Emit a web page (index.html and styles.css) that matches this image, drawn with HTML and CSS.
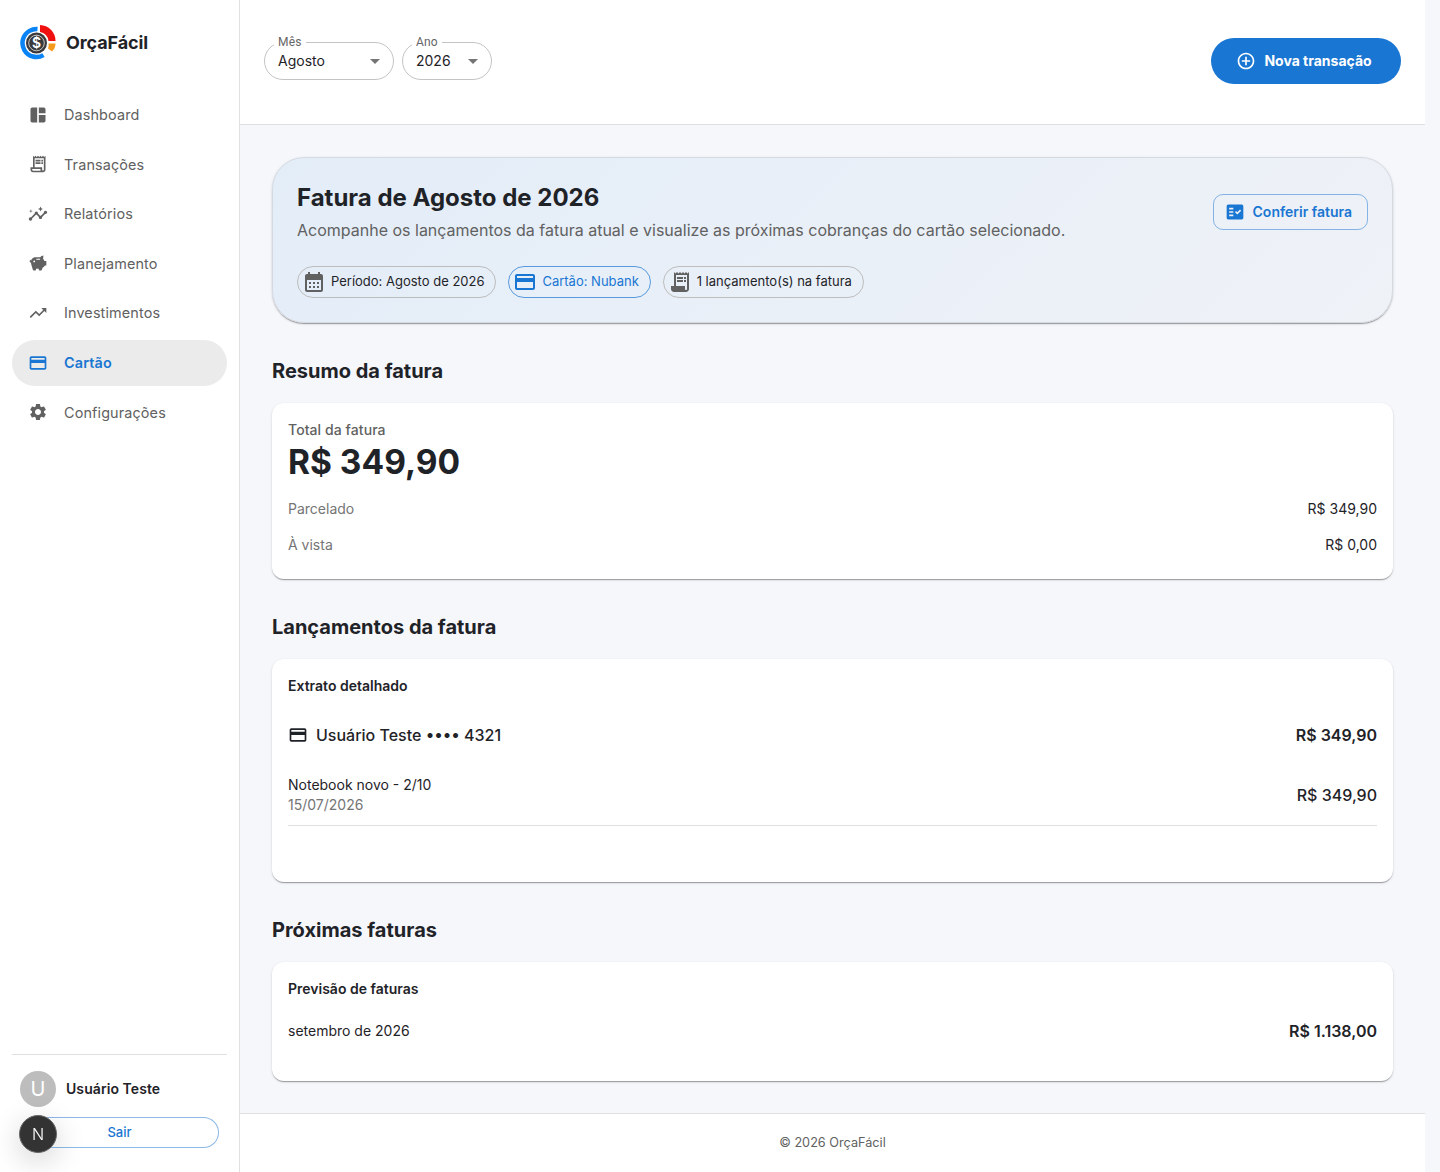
FILE: index.html
```html
<!DOCTYPE html>
<html lang="pt-BR">
<head>
  <meta charset="UTF-8">
  <meta name="viewport" content="width=device-width, initial-scale=1.0">
  <title>OrçaFácil</title>
  <link rel="stylesheet" href="styles.css">
</head>
<body>
  <div class="layout">
    <aside class="sidebar">
      <div class="brand">
        <svg class="brand__logo" viewBox="0 0 36 36">
          <circle cx="16.500" cy="18" r="14" fill="none" stroke="#0a84f5" stroke-width="4.500" stroke-dasharray="52 100" transform="rotate(60 16.500 18)"/>
          <path d="M20 0a16 16 0 0 1 15.500 16h-7a10 10 0 0 0 -8.500 -9z" fill="#f01010"/>
          <path d="M28.500 18.500h7a11 11 0 0 1 -3.500 8l-4 -3a8 8 0 0 0 .5 -5z" fill="#f59a1c"/>
          <circle cx="16.500" cy="18" r="10.500" fill="#3a3a3c"/>
          <circle cx="16.500" cy="18" r="7.800" fill="none" stroke="#fff" stroke-width=".7"/>
          <text class="brand__dollar" x="16.500" y="23" text-anchor="middle">$</text>
        </svg>
        <span class="brand__name">OrçaFácil</span>
      </div>
      <nav class="nav">
        <a class="nav__item">
          <svg class="nav__icon" viewBox="0 0 24 24"><path d="M11 21H5c-1.100 0-2-.9-2-2V5c0-1.100.9-2 2-2h6v18zm2 0h6c1.100 0 2-.9 2-2v-7h-8v9zm8-11V5c0-1.100-.9-2-2-2h-6v7h8z"/></svg>
          Dashboard
        </a>
        <a class="nav__item">
          <svg class="nav__icon" viewBox="0 0 24 24"><path d="M19.500 3.500 18 2l-1.500 1.500L15 2l-1.500 1.500L12 2l-1.500 1.500L9 2 7.500 3.500 6 2v14H3v3c0 1.660 1.340 3 3 3h12c1.660 0 3-1.340 3-3V2zM15 20H6c-.55 0-1-.45-1-1v-1h10zm4-1c0 .55-.45 1-1 1s-1-.45-1-1v-3H8V5h11z"/><path d="M9 7h6v2H9zM16 7h2v2h-2zM9 10h6v2H9zM16 10h2v2h-2z"/></svg>
          Transações
        </a>
        <a class="nav__item">
          <svg class="nav__icon" viewBox="0 0 24 24"><path d="M21 8c-1.450 0-2.260 1.440-1.930 2.510l-3.550 3.560c-.3-.09-.74-.09-1.040 0l-2.550-2.550C12.270 10.450 11.460 9 10 9c-1.450 0-2.270 1.440-1.930 2.520l-4.560 4.550C2.440 15.740 1 16.550 1 18c0 1.100.9 2 2 2 1.450 0 2.260-1.440 1.930-2.510l4.550-4.560c.3.09.74.09 1.040 0l2.550 2.550C12.730 16.550 13.540 18 15 18c1.450 0 2.270-1.440 1.930-2.520l3.560-3.550c1.070.33 2.510-.48 2.510-1.930 0-1.100-.9-2-2-2z"/><path d="m15 9 .94-2.070L18 6l-2.060-.93L15 3l-.92 2.070L12 6l2.080.93zM3.500 11 4 9l2-.5L4 8l-.5-2L3 8l-2 .5L3 9z"/></svg>
          Relatórios
        </a>
        <a class="nav__item">
          <svg class="nav__icon" viewBox="0 0 24 24"><path fill-rule="evenodd" d="M18.500 3c-1.500.2-2.900 1-3.800 2H9.500C6 5 3.500 7.500 3.500 10.500c0 2.300.9 5 1.600 7.300l.7 2.300c.1.5.5.9 1 .9h1.900c.5 0 .9-.4.9-.9V19h3.300v1.100c0 .5.4.9.9.9h1.900c.5 0 .9-.3 1-.8l.8-2.400c1.300-.6 2.200-1.400 2.900-2.700H22V9.500h-2.300c-.3-.9-.9-1.700-1.600-2.300.1-1.100.3-2.200.4-4.200zM7.500 9a1.100 1.100 0 1 1 0 2.200 1.100 1.100 0 0 1 0-2.200zM10 6.800h4.500v1.400H10z"/><path d="M3.500 8.200C2.500 8.400 2 9 2 10s.6 1.600 1.500 1.800z"/></svg>
          Planejamento
        </a>
        <a class="nav__item">
          <svg class="nav__icon" viewBox="0 0 24 24"><path d="m16 6 2.290 2.290-4.880 4.880-4-4L2 16.590 3.410 18l6-6 4 4 6.300-6.290L22 12V6z"/></svg>
          Investimentos
        </a>
        <a class="nav__item nav__item--active">
          <svg class="nav__icon" viewBox="0 0 24 24"><path d="M20 4H4c-1.110 0-1.990.89-1.990 2L2 18c0 1.110.89 2 2 2h16c1.110 0 2-.89 2-2V6c0-1.110-.89-2-2-2zm0 14H4v-6h16v6zm0-10H4V6h16v2z"/></svg>
          Cartão
        </a>
        <a class="nav__item">
          <svg class="nav__icon" viewBox="0 0 24 24"><path d="M19.140 12.940c.04-.3.06-.61.06-.94 0-.32-.02-.64-.07-.94l2.030-1.580c.18-.14.23-.41.12-.61l-1.920-3.320c-.12-.22-.37-.29-.59-.22l-2.390.96c-.5-.38-1.030-.7-1.620-.94l-.36-2.540c-.04-.24-.24-.41-.48-.41h-3.840c-.24 0-.43.17-.47.41l-.36 2.540c-.59.24-1.130.57-1.620.94l-2.390-.96c-.22-.08-.47 0-.59.22L2.740 8.870c-.12.21-.08.47.12.61l2.030 1.580c-.05.3-.09.63-.09.94s.02.64.07.94l-2.030 1.580c-.18.14-.23.41-.12.61l1.920 3.320c.12.22.37.29.59.22l2.390-.96c.5.38 1.030.7 1.620.94l.36 2.540c.05.24.24.41.48.41h3.840c.24 0 .44-.17.47-.41l.36-2.540c.59-.24 1.130-.56 1.620-.94l2.390.96c.22.08.47 0 .59-.22l1.920-3.320c.12-.22.07-.47-.12-.61l-2.010-1.580zM12 15.600c-1.980 0-3.600-1.620-3.600-3.600s1.620-3.600 3.600-3.600 3.600 1.620 3.600 3.600-1.620 3.600-3.600 3.600z"/></svg>
          Configurações
        </a>
      </nav>
      <div class="user">
        <div class="user__row">
          <span class="user__avatar">U</span>
          <span class="user__name">Usuário Teste</span>
        </div>
        <button class="user__logout">Sair</button>
      </div>
    </aside>

    <div class="main">
      <header class="topbar">
        <div class="filters">
          <div class="select select--month">
            <span class="select__label">Mês</span>
            <span class="select__value">Agosto</span>
            <span class="select__arrow"></span>
          </div>
          <div class="select select--year">
            <span class="select__label">Ano</span>
            <span class="select__value">2026</span>
            <span class="select__arrow"></span>
          </div>
        </div>
        <button class="new-button">
          <svg class="new-button__icon" viewBox="0 0 24 24"><path d="M13 7h-2v4H7v2h4v4h2v-4h4v-2h-4V7zm-1-5C6.480 2 2 6.480 2 12s4.480 10 10 10 10-4.480 10-10S17.520 2 12 2zm0 18c-4.410 0-8-3.590-8-8s3.590-8 8-8 8 3.590 8 8-3.590 8-8 8z"/></svg>
          Nova transação
        </button>
      </header>

      <main class="content">
        <section class="hero">
          <div class="hero__text">
            <h1 class="hero__title">Fatura de Agosto de 2026</h1>
            <p class="hero__subtitle">Acompanhe os lançamentos da fatura atual e visualize as próximas cobranças do cartão selecionado.</p>
            <div class="chips">
              <span class="chip">
                <svg class="chip__icon" viewBox="0 0 24 24"><path d="M19 4h-1V2h-2v2H8V2H6v2H5c-1.110 0-1.990.9-1.990 2L3 20c0 1.100.89 2 2 2h14c1.100 0 2-.9 2-2V6c0-1.100-.9-2-2-2zm0 16H5V10h14v10zM9 14H7v-2h2v2zm4 0h-2v-2h2v2zm4 0h-2v-2h2v2zm-8 4H7v-2h2v2zm4 0h-2v-2h2v2zm4 0h-2v-2h2v2z"/></svg>
                <span class="chip__text">Período: Agosto de 2026</span>
              </span>
              <span class="chip chip--primary">
                <svg class="chip__icon" viewBox="0 0 24 24"><path d="M20 4H4c-1.110 0-1.990.89-1.990 2L2 18c0 1.110.89 2 2 2h16c1.110 0 2-.89 2-2V6c0-1.110-.89-2-2-2zm0 14H4v-6h16v6zm0-10H4V6h16v2z"/></svg>
                <span class="chip__text">Cartão: Nubank</span>
              </span>
              <span class="chip">
                <svg class="chip__icon" viewBox="0 0 24 24"><path d="M19.500 3.500 18 2l-1.500 1.500L15 2l-1.500 1.500L12 2l-1.500 1.500L9 2 7.500 3.500 6 2v14H3v3c0 1.660 1.340 3 3 3h12c1.660 0 3-1.340 3-3V2zM19 19c0 .55-.45 1-1 1s-1-.45-1-1v-3H8V5h11z"/><path d="M9 7h6v2H9zM16 7h2v2h-2zM9 10h6v2H9zM16 10h2v2h-2z"/></svg>
                <span class="chip__text">1 lançamento(s) na fatura</span>
              </span>
            </div>
          </div>
          <button class="check-button">
            <svg class="check-button__icon" viewBox="0 0 24 24"><path d="M20 3H4c-1.100 0-2 .9-2 2v14c0 1.100.9 2 2 2h16c1.100 0 2-.9 2-2V5c0-1.100-.9-2-2-2zM10 17H5v-2h5v2zm0-4H5v-2h5v2zm0-4H5V7h5v2zm4.820 6L12 12.160l1.410-1.410 1.410 1.420L17.990 9l1.420 1.420L14.820 15z"/></svg>
            Conferir fatura
          </button>
        </section>

        <h2 class="section-title">Resumo da fatura</h2>
        <section class="card card--summary">
          <div class="summary__label">Total da fatura</div>
          <div class="summary__total">R$ 349,90</div>
          <div class="summary__row"><span class="muted">Parcelado</span><span>R$ 349,90</span></div>
          <div class="summary__row"><span class="muted">À vista</span><span>R$ 0,00</span></div>
        </section>

        <h2 class="section-title">Lançamentos da fatura</h2>
        <section class="card card--entries">
          <h3 class="card__title">Extrato detalhado</h3>
          <div class="statement">
            <div class="statement__card">
              <svg class="statement__icon" viewBox="0 0 24 24"><path d="M20 4H4c-1.110 0-1.990.89-1.990 2L2 18c0 1.110.89 2 2 2h16c1.110 0 2-.89 2-2V6c0-1.110-.89-2-2-2zm0 14H4v-6h16v6zm0-10H4V6h16v2z"/></svg>
              Usuário Teste •••• 4321
            </div>
            <span class="statement__sum">R$ 349,90</span>
          </div>
          <div class="entry">
            <div>
              <div class="entry__name">Notebook novo - 2/10</div>
              <div class="entry__date">15/07/2026</div>
            </div>
            <span class="entry__sum">R$ 349,90</span>
          </div>
        </section>

        <h2 class="section-title">Próximas faturas</h2>
        <section class="card card--next">
          <h3 class="card__title">Previsão de faturas</h3>
          <div class="forecast">
            <span class="forecast__label">setembro de 2026</span>
            <span class="forecast__sum">R$ 1.138,00</span>
          </div>
        </section>
      </main>

      <footer class="footer">© 2026 OrçaFácil</footer>
    </div>
  </div>
  <button class="dev-badge">N</button>
</body>
</html>
```

FILE: styles.css
```css
* {
  box-sizing: border-box;
}

html,
body {
  margin: 0;
  height: 100%;
}

body {
  background: #f5f7fb;
  color: #1f2328;
  font-family: Inter, "Liberation Sans", sans-serif;
  overflow: hidden;
}

.layout {
  display: flex;
  width: 1425px;
  height: 1172px;
}

.sidebar {
  display: flex;
  flex-direction: column;
  flex: 0 0 240px;
  padding: 0 12px;
  background: #fff;
  border-right: 1px solid #e0e0e0;
}

.brand {
  display: flex;
  align-items: center;
  gap: 10px;
  height: 85px;
  padding-left: 8px;
}

.brand__logo {
  width: 36px;
  height: 36px;
}

.brand__dollar {
  fill: #fff;
  font-family: Inter, sans-serif;
  font-size: 14px;
  font-weight: 600;
}

.brand__name {
  font-size: 18px;
  font-weight: 700;
  letter-spacing: -.1px;
}

.nav {
  display: flex;
  flex-direction: column;
  gap: 3.6px;
  padding-top: 6.55px;
}

.nav__item {
  display: flex;
  align-items: center;
  height: 46px;
  padding-left: 16px;
  border-radius: 23px;
  color: #616161;
  font-size: 14.4px;
  letter-spacing: .00938em;
}

.nav__icon {
  flex: 0 0 20px;
  width: 20px;
  height: 20px;
  margin-right: 16px;
  fill: #616161;
}

.nav__item--active {
  background: #ebebeb;
  color: #1976d2;
  font-weight: 600;
}

.nav__item--active .nav__icon {
  fill: #1976d2;
}

.user {
  margin-top: auto;
  padding: 16px 8px 24px;
  border-top: 1px solid #e0e0e0;
}

.user__row {
  display: flex;
  align-items: center;
  gap: 10px;
  margin-bottom: 10px;
}

.user__avatar {
  display: flex;
  align-items: center;
  justify-content: center;
  width: 36px;
  height: 36px;
  border-radius: 50%;
  background: #bdbdbd;
  color: #fff;
  font-size: 20px;
}

.user__name {
  padding-bottom: 2px;
  font-size: 14px;
  font-weight: 600;
  letter-spacing: .07px;
}

.user__logout {
  display: block;
  width: 199px;
  height: 31px;
  padding-bottom: 2px;
  border: 1px solid rgba(25, 118, 210, .5);
  border-radius: 16px;
  background: #fff;
  color: #1976d2;
  font-family: inherit;
  font-size: 13px;
  font-weight: 500;
}

.main {
  display: flex;
  flex-direction: column;
  flex: 1;
  min-width: 0;
}

.topbar {
  display: flex;
  align-items: center;
  justify-content: space-between;
  height: 125px;
  padding: 0 24px;
  background: #fff;
  border-bottom: 1px solid #e0e0e0;
}

.filters {
  display: flex;
  gap: 8px;
  margin-top: -3px;
}

.select {
  position: relative;
  display: flex;
  align-items: center;
  height: 38px;
  padding: 0 13px;
  border: 1px solid #c4c4c4;
  border-radius: 19px;
  background: #fff;
}

.select--month {
  width: 130px;
}

.select--year {
  width: 90px;
}

.select__label {
  position: absolute;
  top: -8px;
  left: 9px;
  padding: 0 4px;
  background: #fff;
  color: #666;
  font-family: Roboto, sans-serif;
  font-size: 12px;
  letter-spacing: .2px;
  line-height: 14px;
}

.select__value {
  font-size: 14px;
  color: #1f2328;
}

.select__arrow {
  position: absolute;
  right: 13px;
  top: 16px;
  border-style: solid;
  border-width: 5px 5px 0;
  border-color: #757575 transparent transparent;
}

.new-button {
  display: flex;
  align-items: center;
  justify-content: center;
  gap: 8px;
  width: 190px;
  height: 46px;
  margin-top: -3px;
  padding: 0 4px 0 0;
  border: 0;
  border-radius: 23px;
  background: #1976d2;
  color: #fff;
  font-family: inherit;
  font-size: 14px;
  font-weight: 700;
}

.new-button__icon {
  width: 20px;
  height: 20px;
  fill: #fff;
}

.content {
  flex: 1;
  padding: 32px 32px 0;
}

.hero {
  display: flex;
  align-items: flex-start;
  justify-content: space-between;
  height: 166px;
  padding: 24px;
  border: 1px solid #d5d9e0;
  border-radius: 32px;
  background: linear-gradient(135deg, #e3edf8, #eff2f7);
  box-shadow: 0 2px 1px -1px rgba(0, 0, 0, .2), 0 1px 1px rgba(0, 0, 0, .14), 0 1px 3px rgba(0, 0, 0, .12);
}

.hero__title {
  margin: 0 0 4px;
  font-size: 24px;
  font-weight: 700;
  line-height: 32px;
}

.hero__subtitle {
  margin: 0 0 24px;
  color: #616161;
  font-size: 16px;
  line-height: 24px;
}

.chips {
  display: flex;
  gap: 12px;
}

.chip {
  display: flex;
  align-items: center;
  gap: 5px;
  height: 32px;
  padding: 0 10.9px 0 4px;
  border: 1px solid #bdbdbd;
  border-radius: 16px;
  font-size: 13px;
}

.chip__text {
  padding-bottom: 2px;
}

.chip__icon {
  width: 24px;
  height: 24px;
  fill: #616161;
}

.chip--primary {
  border-color: rgba(25, 118, 210, .7);
  color: #1976d2;
}

.chip--primary .chip__icon {
  fill: #1976d2;
}

.check-button {
  display: flex;
  align-items: center;
  gap: 8px;
  height: 36px;
  margin-top: 12px;
  padding: 0 15px 1px 11px;
  border: 1px solid rgba(25, 118, 210, .5);
  border-radius: 10px;
  background: transparent;
  color: #1976d2;
  font-family: inherit;
  font-size: 14px;
  font-weight: 600;
}

.check-button__icon {
  width: 20px;
  height: 20px;
  fill: #1976d2;
}

.section-title {
  margin: 32px 0 16px;
  font-size: 20px;
  font-weight: 700;
  line-height: 32px;
}

.card {
  padding: 16px;
  border-radius: 12px;
  background: #fff;
  box-shadow: 0 2px 1px -1px rgba(0, 0, 0, .2), 0 1px 1px rgba(0, 0, 0, .14), 0 1px 3px rgba(0, 0, 0, .12);
}

.card--summary {
  height: 176px;
}

.card--entries {
  height: 223px;
}

.card--next {
  height: 119px;
}

.card__title {
  margin: 0;
  font-size: 14px;
  font-weight: 600;
  line-height: 22px;
}

.summary__label {
  color: #616161;
  font-size: 14px;
  font-weight: 500;
  letter-spacing: .08px;
  line-height: 22px;
}

.summary__total {
  margin-bottom: 6px;
  font-size: 33.5px;
  font-weight: 700;
  line-height: 43px;
}

.summary__row {
  display: flex;
  justify-content: space-between;
  height: 36px;
  align-items: center;
  font-size: 14px;
}

.muted {
  color: #757575;
}

.statement {
  display: flex;
  align-items: center;
  justify-content: space-between;
  margin-top: 18px;
  height: 40px;
  font-size: 16px;
  font-weight: 500;
}

.statement__card {
  display: flex;
  align-items: center;
  gap: 8px;
}

.statement__icon {
  width: 20px;
  height: 20px;
  fill: #1f2328;
}

.statement__sum {
  font-size: 16px;
  font-weight: 600;
}

.entry {
  display: flex;
  align-items: center;
  justify-content: space-between;
  margin-top: 20px;
  padding-bottom: 10px;
  border-bottom: 1px solid #e0e0e0;
}

.entry__name {
  font-size: 14px;
  line-height: 20px;
}

.entry__date {
  color: #757575;
  font-size: 14px;
  line-height: 20px;
}

.entry__sum {
  font-size: 16px;
  font-weight: 500;
}

.forecast {
  display: flex;
  align-items: center;
  justify-content: space-between;
  margin-top: 11px;
  height: 40px;
  font-size: 14px;
}

.forecast__label {
  padding-bottom: 2px;
}

.forecast__sum {
  font-size: 16px;
  font-weight: 600;
}

.footer {
  height: 59px;
  background: #fff;
  border-top: 1px solid #e0e0e0;
  color: #616161;
  font-size: 12.7px;
  line-height: 57px;
  text-align: center;
}

.dev-badge {
  position: fixed;
  left: 19px;
  top: 1115px;
  width: 38px;
  height: 38px;
  border: 1px solid #666;
  border-radius: 50%;
  background: #333;
  color: #fff;
  font-family: Inter, sans-serif;
  font-size: 16px;
  font-weight: 300;
  box-shadow: 0 8px 30px rgba(0, 0, 0, .18);
}
```
